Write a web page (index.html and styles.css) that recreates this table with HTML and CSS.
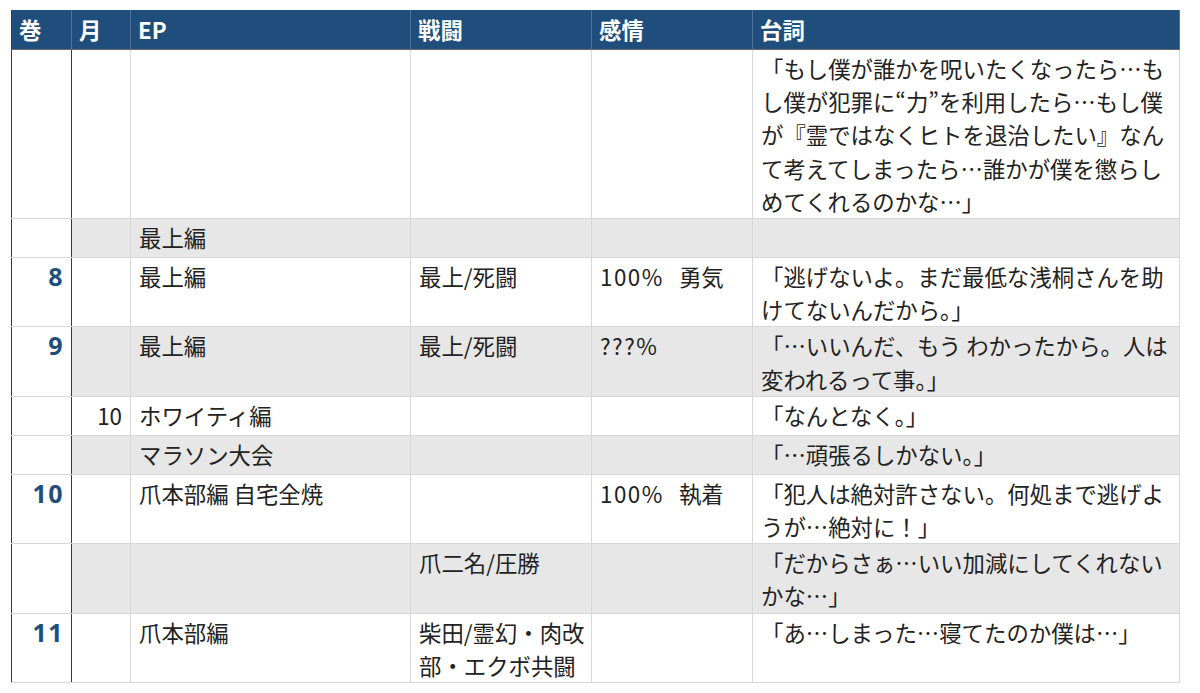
FILE: index.html
```html
<!DOCTYPE html>
<html lang="ja">
<head>
<meta charset="utf-8">
<link rel="stylesheet" href="styles.css">
</head>
<body>
<table class="sheet">
  <colgroup>
    <col class="c-vol"><col class="c-mon"><col class="c-ep"><col class="c-bat"><col class="c-emo"><col class="c-line">
  </colgroup>
  <thead>
    <tr><th>巻</th><th>月</th><th>EP</th><th>戦闘</th><th>感情</th><th>台詞</th></tr>
  </thead>
  <tbody>
    <tr>
      <td class="vol"></td><td class="mon"></td><td></td><td></td><td></td>
      <td>「もし僕が誰かを呪いたくなったら…も<br>し僕が犯罪に“力”を利用したら…もし僕<br>が『霊ではなくヒトを退治したい』なん<br>て考えてしまったら…誰かが僕を懲らし<br>めてくれるのかな…」</td>
    </tr>
    <tr class="alt">
      <td class="vol"></td><td class="mon"></td><td>最上編</td><td></td><td></td><td></td>
    </tr>
    <tr>
      <td class="vol">8</td><td class="mon"></td><td>最上編</td><td>最上/死闘</td><td><span class="pct">100%</span>勇気</td>
      <td>「逃げないよ。まだ最低な浅桐さんを助<br>けてないんだから。」</td>
    </tr>
    <tr class="alt">
      <td class="vol">9</td><td class="mon"></td><td>最上編</td><td>最上/死闘</td><td><span class="pct">???%</span></td>
      <td>「…いいんだ、もう わかったから。人は<br>変われるって事。」</td>
    </tr>
    <tr>
      <td class="vol"></td><td class="mon">10</td><td>ホワイティ編</td><td></td><td></td>
      <td>「なんとなく。」</td>
    </tr>
    <tr class="alt">
      <td class="vol"></td><td class="mon"></td><td>マラソン大会</td><td></td><td></td>
      <td>「…頑張るしかない。」</td>
    </tr>
    <tr>
      <td class="vol">10</td><td class="mon"></td><td>爪本部編 自宅全焼</td><td></td><td><span class="pct">100%</span>執着</td>
      <td>「犯人は絶対許さない。何処まで逃げよ<br>うが…絶対に！」</td>
    </tr>
    <tr class="alt">
      <td class="vol"></td><td class="mon"></td><td></td><td>爪二名/圧勝</td><td></td>
      <td>「だからさぁ…いい加減にしてくれない<br>かな…」</td>
    </tr>
    <tr>
      <td class="vol">11</td><td class="mon"></td><td>爪本部編</td><td>柴田/霊幻・肉改<br>部・エクボ共闘</td><td></td>
      <td>「あ…しまった…寝てたのか僕は…」</td>
    </tr>
  </tbody>
</table>
</body>
</html>
```

FILE: styles.css
```css
html, body {
  background: #ffffff;
}
body {
  margin: 10px 0 0 11px;
  font-family: "Noto Sans CJK JP", "Noto Sans", sans-serif;
  color: #222222;
}
.sheet {
  border-collapse: collapse;
  table-layout: fixed;
  width: 1168px;
  font-size: 22.4px;
}
.c-vol { width: 60px; }
.c-mon { width: 59px; }
.c-ep { width: 280px; }
.c-bat { width: 181px; }
.c-emo { width: 161px; }
.c-line { width: 427px; }

.sheet th {
  background: #1f4e7c;
  color: #ffffff;
  font-weight: 700;
  text-align: left;
  height: 39px;
  padding: 0 7px;
  line-height: 39px;
  border-left: 1px solid #4f739a;
  border-right: 1px solid #4f739a;
  border-bottom: 1px solid #6b6b6b;
  white-space: nowrap;
}
.sheet th:first-child {
  border-left: 1px solid #3a3a3a;
}
.sheet tbody tr {
  height: 39px;
}
.sheet td {
  border: 1px solid #d8d8d8;
  padding: 2px 8px 0 8px;
  line-height: 33.2px;
  vertical-align: top;
  white-space: nowrap;
  overflow: hidden;
}
.sheet tr.alt td {
  background: #e7e7e7;
}
.sheet tr.alt td.vol {
  background: #ffffff;
}
.sheet td.vol {
  text-align: right;
  font-family: "Noto Sans", "Noto Sans CJK JP", sans-serif;
  font-size: 25px;
  font-weight: 700;
  letter-spacing: 1.5px;
  padding-right: 7px;
  color: #1f4e7c;
  border-left: 1px solid #3a3a3a;
  border-right: 1px solid #3a3a3a;
}
.sheet td.mon {
  text-align: right;
}
.pct {
  margin-right: 15px;
  letter-spacing: 1.5px;
}
```
